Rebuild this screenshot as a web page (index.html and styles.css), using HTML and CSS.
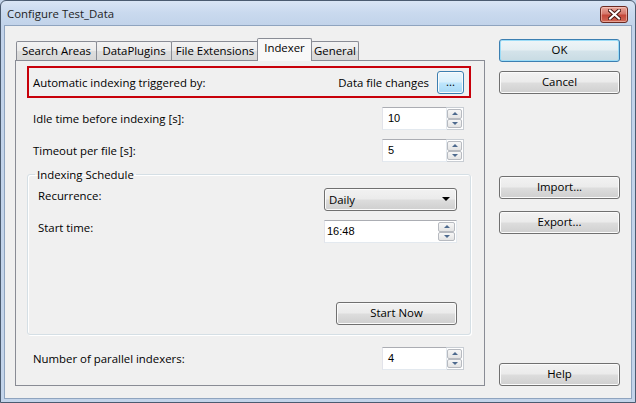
FILE: index.html
```html
<!DOCTYPE html>
<html>
<head>
<meta charset="utf-8">
<title>Configure Test_Data</title>
<link rel="stylesheet" href="styles.css">
</head>
<body>
<div class="window">
  <div class="titlebar">
    <span class="title">Configure Test_Data</span>
    <div class="close">
      <svg width="13" height="11" viewBox="0 0 13 11">
        <path d="M2 1.5 L11 9.5 M11 1.5 L2 9.5" stroke="#4a1a14" stroke-width="4" stroke-linecap="square"/>
        <path d="M2 1.5 L11 9.5 M11 1.5 L2 9.5" stroke="#ffffff" stroke-width="2" stroke-linecap="square"/>
      </svg>
    </div>
  </div>
  <div class="client">
    <div class="tabctl">
      <div class="tabstrip">
        <div class="tab t-search">Search Areas</div>
        <div class="tab t-plugins">DataPlugins</div>
        <div class="tab t-ext">File Extensions</div>
        <div class="tab active t-indexer">Indexer</div>
        <div class="tab t-general">General</div>
      </div>
      <div class="panel">
        <div class="trigger">
          <span class="label">Automatic indexing triggered by:</span>
          <span class="trigger-value">Data file changes</span>
          <div class="btn hot dots">...</div>
        </div>
        <div class="row">
          <span class="label">Idle time before indexing [s]:</span>
          <div class="spin">
            <div class="edit">10</div>
            <div class="updown">
              <div class="ud up"><span class="arr-up"></span></div>
              <div class="ud down"><span class="arr-down"></span></div>
            </div>
          </div>
        </div>
        <div class="row">
          <span class="label">Timeout per file [s]:</span>
          <div class="spin">
            <div class="edit">5</div>
            <div class="updown">
              <div class="ud up"><span class="arr-up"></span></div>
              <div class="ud down"><span class="arr-down"></span></div>
            </div>
          </div>
        </div>
        <fieldset class="group">
          <legend>Indexing Schedule</legend>
          <div class="grow first">
            <span class="glabel">Recurrence:</span>
            <div class="combo"><span>Daily</span><span class="combo-arrow"></span></div>
          </div>
          <div class="grow second">
            <span class="glabel">Start time:</span>
            <div class="timefield">
              <span class="timetext">16:48</span>
              <div class="updown inner">
                <div class="ud up"><span class="arr-up"></span></div>
                <div class="ud down"><span class="arr-down"></span></div>
              </div>
            </div>
          </div>
          <div class="startrow">
            <div class="btn startnow">Start Now</div>
          </div>
        </fieldset>
        <div class="row last">
          <span class="label">Number of parallel indexers:</span>
          <div class="spin">
            <div class="edit">4</div>
            <div class="updown">
              <div class="ud up"><span class="arr-up"></span></div>
              <div class="ud down"><span class="arr-down"></span></div>
            </div>
          </div>
        </div>
      </div>
    </div>
    <div class="side">
      <div class="btn default">OK</div>
      <div class="btn gap9">Cancel</div>
      <div class="btn import">Import...</div>
      <div class="btn gap12">Export...</div>
      <div class="btn help">Help</div>
    </div>
  </div>
</div>
</body>
</html>
```
FILE: styles.css
```css
* { box-sizing: border-box; }
html, body { margin: 0; padding: 0; }
body {
  font-family: "Open Sans", "Noto Sans", sans-serif;
  font-size: 11.4px;
  color: #000;
  background: #c3d4ea;
}
.window {
  width: 636px;
  height: 403px;
  border: 1px solid #4b5b70;
  border-radius: 6px 6px 0 0;
  background: linear-gradient(#d9e5f4 0px, #c9d9ee 12px, #c2d3ea 24px, #c3d4ea 100%);
  display: flex;
  flex-direction: column;
  overflow: hidden;
}
.titlebar {
  height: 24px;
  display: flex;
  align-items: center;
  padding: 0 7px 0 6px;
  flex: none;
}
.title {
  color: #1e1e1e;
  margin-top: 1px;
}
.close {
  margin-left: auto;
  margin-top: 2px;
  width: 28px;
  height: 17px;
  border: 1px solid #6b2a22;
  border-radius: 3px;
  background: linear-gradient(#e8a89d 0%, #d5786b 45%, #c4483a 55%, #d06a58 100%);
  box-shadow: inset 0 0 0 1px rgba(255,220,210,0.5);
  display: flex;
  align-items: center;
  justify-content: center;
}
.client {
  flex: 1;
  margin: 0 3px 3px 3px;
  border: 1px solid #8fa4bf;
  background: #f0f0f0;
  display: flex;
  padding: 12px 11px 12px 10px;
}
.tabctl {
  width: 470px;
  display: flex;
  flex-direction: column;
}
.tabstrip {
  height: 22px;
  display: flex;
  align-items: flex-end;
  padding-left: 1px;
  flex: none;
}
.tab {
  height: 19px;
  border: 1px solid #898c95;
  border-bottom: none;
  margin-right: -1px;
  background: linear-gradient(#f3f3f3 0%, #ebebeb 50%, #dedede 51%, #d7d7d7 100%);
  line-height: 18px;
  white-space: nowrap;
  text-align: center;
  border-radius: 2px 2px 0 0;
}
.t-search { width: 81px; }
.t-plugins { width: 76px; }
.t-ext { width: 88px; }
.t-indexer { width: 55px; }
.t-general { width: 48px; }
.tab.active {
  height: 23px;
  margin: 0 -1px -1px -1px;
  background: #f8f8f8;
  position: relative;
  z-index: 1;
  line-height: 17px;
}
.panel {
  flex: 1;
  border: 1px solid #898c95;
  background: #f0f0f0;
  padding: 5px 13px 0 11px;
  display: flex;
  flex-direction: column;
}
.trigger {
  height: 32px;
  border: 2px solid #c8000a;
  display: flex;
  align-items: center;
  padding: 0 5px 0 4px;
}
.trigger .label { flex: 1; }
.trigger-value { margin-right: 8px; }
.btn {
  height: 23px;
  border: 1px solid #707070;
  border-radius: 3px;
  background: linear-gradient(#f2f2f2 0%, #ebebeb 48%, #dddddd 52%, #cfcfcf 100%);
  box-shadow: inset 0 0 0 1px #fbfbfb;
  display: flex;
  align-items: center;
  justify-content: center;
  line-height: 1;
  padding-bottom: 1px;
}
.btn.hot {
  border-color: #3c7fb1;
  background: linear-gradient(#eaf6fd 0%, #d9f0fc 48%, #bee6fd 52%, #a7d9f5 100%);
}
.btn.dots {
  width: 27px;
  padding-bottom: 5px;
  align-items: flex-end;
}
.btn.default {
  border-color: #3c7fb1;
  box-shadow: inset 0 0 0 1px #9bdcf7;
  background: linear-gradient(#eef5f8 0%, #e4eef2 48%, #d4e3ea 52%, #c8dbe3 100%);
  margin-top: 1px;
}
.row {
  display: flex;
  align-items: center;
  justify-content: space-between;
  height: 23px;
  margin-top: 9px;
  padding: 0 7px 0 6px;
}
.row.last { margin-top: 12px; }
.spin {
  display: flex;
  height: 23px;
  width: 82px;
}
.edit {
  flex: 1;
  background: #fff;
  border: 1px solid #e3e9ef;
  border-top-color: #abadb3;
  border-left-color: #e2e3ea;
  font-family: "Liberation Sans", Arial, sans-serif;
  font-size: 11px;
  padding: 4px 0 0 5px;
}
.updown {
  width: 17px;
  display: flex;
  flex-direction: column;
  border: 1px solid #c8cdd3;
  border-left: none;
  background: #fff;
  padding: 1px 1px 1px 0;
}
.ud {
  flex: 1;
  border: 1px solid #b7bac0;
  border-radius: 2px;
  background: linear-gradient(#f7f7f7, #e4e4e4);
  display: flex;
  align-items: center;
  justify-content: center;
}
.arr-up {
  width: 0; height: 0;
  border-left: 3px solid transparent;
  border-right: 3px solid transparent;
  border-bottom: 3px solid #4e6a8e;
}
.arr-down {
  width: 0; height: 0;
  border-left: 3px solid transparent;
  border-right: 3px solid transparent;
  border-top: 3px solid #4e6a8e;
}
.group {
  margin: 5px 0 0 0;
  border: 1px solid #d5dfe5;
  border-radius: 3px;
  box-shadow: inset 1px 1px 0 #ffffff, 1px 1px 0 #ffffff;
  padding: 0 13px 9px 10px;
  min-width: 0;
}
.group legend {
  padding: 0 2px;
  margin-left: -3px;
  line-height: 15px;
}
.grow {
  display: flex;
  justify-content: space-between;
  align-items: flex-start;
  height: 23px;
}
.grow.first { margin-top: 6px; }
.grow.second { margin-top: 9px; }
.combo {
  width: 133px;
  height: 23px;
  border: 1px solid #707070;
  border-radius: 3px;
  background: linear-gradient(#f2f2f2 0%, #ebebeb 48%, #dddddd 52%, #cfcfcf 100%);
  box-shadow: inset 0 0 0 1px #fbfbfb;
  display: flex;
  align-items: center;
  justify-content: space-between;
  padding: 0 4px 1px 4px;
}
.combo-arrow {
  width: 0; height: 0;
  border-left: 4px solid transparent;
  border-right: 4px solid transparent;
  border-top: 4px solid #000;
  margin-right: 2px;
}
.timefield {
  width: 133px;
  height: 23px;
  background: #fff;
  border: 1px solid #e3e9ef;
  border-top-color: #abadb3;
  border-left-color: #e2e3ea;
  display: flex;
  align-items: center;
  padding: 1px 1px 1px 2px;
}
.timetext {
  flex: 1;
  font-family: "Liberation Sans", Arial, sans-serif;
  font-size: 11px;
  padding-bottom: 1px;
}
.updown.inner {
  height: 100%;
  border: none;
  padding: 0;
  width: 17px;
}
.startrow {
  margin-top: 59px;
  display: flex;
  justify-content: flex-end;
}
.btn.startnow { width: 121px; }
.side {
  width: 121px;
  margin-left: 14px;
  display: flex;
  flex-direction: column;
}
.btn.gap9 { margin-top: 9px; }
.btn.import { margin-top: 82px; }
.btn.gap12 { margin-top: 12px; }
.btn.help { margin-top: auto; }
```
